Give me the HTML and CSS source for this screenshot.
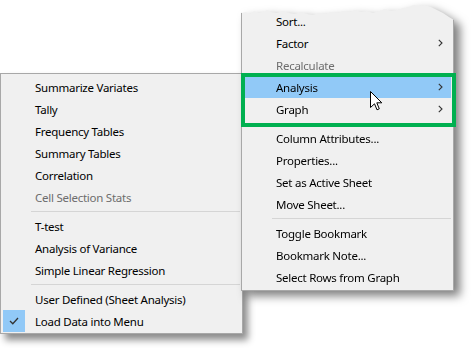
FILE: index.html
```html
<!DOCTYPE html>
<html lang="en">

<head>
    <meta charset="UTF-8" />
    <meta name="viewport" content="width=device-width, initial-scale=1.0" />
    <title>Context Menu</title>
    <link rel="stylesheet" href="styles.css">
</head>

<body>
    <div class="canvas">

        <!-- Submenu: Analysis -->
        <ul class="menu menu-sub">
            <li class="item"><span class="check"></span><span class="label">Summarize Variates</span></li>
            <li class="item"><span class="check"></span><span class="label">Tally</span></li>
            <li class="item"><span class="check"></span><span class="label">Frequency Tables</span></li>
            <li class="item"><span class="check"></span><span class="label">Summary Tables</span></li>
            <li class="item"><span class="check"></span><span class="label">Correlation</span></li>
            <li class="item disabled"><span class="check"></span><span class="label">Cell Selection Stats</span></li>
            <li class="sep"></li>
            <li class="item"><span class="check"></span><span class="label">T-test</span></li>
            <li class="item"><span class="check"></span><span class="label">Analysis of Variance</span></li>
            <li class="item"><span class="check"></span><span class="label">Simple Linear Regression</span></li>
            <li class="sep"></li>
            <li class="item"><span class="check"></span><span class="label">User Defined (Sheet Analysis)</span></li>
            <li class="item">
                <span class="check on">
                    <svg width="10" height="8" viewBox="0 0 10 8"><polyline points="1,4 3.8,6.8 9,1" fill="none" stroke="#333" stroke-width="1.3"/></svg>
                </span>
                <span class="label">Load Data into Menu</span>
            </li>
        </ul>

        <!-- Main context menu (top is torn off) -->
        <div class="main-wrap">
            <ul class="menu menu-main">
                <li class="item"><span class="check"></span><span class="label">Sort...</span></li>
                <li class="item"><span class="check"></span><span class="label">Factor</span><span class="arrow"><svg width="5" height="8" viewBox="0 0 5 8"><polyline points="0.8,0.8 4,4 0.8,7.2" fill="none" stroke="#333" stroke-width="1.1"/></svg></span></li>
                <li class="item disabled"><span class="check"></span><span class="label">Recalculate</span></li>
                <li class="item active"><span class="check"></span><span class="label">Analysis</span><span class="arrow"><svg width="5" height="8" viewBox="0 0 5 8"><polyline points="0.8,0.8 4,4 0.8,7.2" fill="none" stroke="#333" stroke-width="1.1"/></svg></span></li>
                <li class="item"><span class="check"></span><span class="label">Graph</span><span class="arrow"><svg width="5" height="8" viewBox="0 0 5 8"><polyline points="0.8,0.8 4,4 0.8,7.2" fill="none" stroke="#333" stroke-width="1.1"/></svg></span></li>
                <li class="sep"></li>
                <li class="item"><span class="check"></span><span class="label">Column Attributes...</span></li>
                <li class="item"><span class="check"></span><span class="label">Properties...</span></li>
                <li class="item"><span class="check"></span><span class="label">Set as Active Sheet</span></li>
                <li class="item"><span class="check"></span><span class="label">Move Sheet...</span></li>
                <li class="sep"></li>
                <li class="item"><span class="check"></span><span class="label">Toggle Bookmark</span></li>
                <li class="item"><span class="check"></span><span class="label">Bookmark Note...</span></li>
                <li class="item"><span class="check"></span><span class="label">Select Rows from Graph</span></li>
            </ul>
        </div>

        <!-- Green annotation around Analysis / Graph -->
        <div class="highlight-box"></div>

        <!-- Mouse pointer -->
        <svg class="cursor" width="13" height="20" viewBox="0 0 13 20">
            <path d="M0.5 0.5 V16.5 L4.5 12.8 L7 18.8 L9.3 17.8 L6.8 11.8 H11.8 Z" fill="#fff" stroke="#000" stroke-width="1" stroke-linejoin="miter"/>
        </svg>
    </div>
</body>

</html>
```

FILE: styles.css
```css
/* Page */
body {
    margin: 0;
    background: #fff;
    font-family: "Noto Sans", "Open Sans", sans-serif;
    font-size: 11.5px;
    letter-spacing: -0.25px;
    color: #000;
}

/* Free canvas holding the two popup menus */
.canvas {
    position: relative;
    width: 474px;
    height: 350px;
    overflow: hidden;
}

/* Common menu box */
.menu {
    list-style: none;
    margin: 0;
    padding: 2px;
    background: #f0f0f0;
    border: 1px solid #a8a8a8;
    box-sizing: border-box;
}

/* Left submenu */
.menu-sub {
    position: absolute;
    left: 0;
    top: 73px;
    width: 243px;
    height: 261px;
    box-shadow: 5px 6px 7px rgba(0, 0, 0, 0.45);
}

/* Wrapper gives the torn menu its shadow */
.main-wrap {
    position: absolute;
    left: 241px;
    top: 0;
    filter: drop-shadow(6px 5px 5px rgba(0, 0, 0, 0.5));
}

/* Right (main) menu with a torn top edge */
.menu-main {
    width: 213px;
    height: 291px;
    border-top: none;
    padding-top: 10px;
    clip-path: polygon(0 13px, 5px 12px, 9px 14px, 13px 11px, 18px 13px, 22px 12px, 26px 10px, 30px 12px,
        36px 13px, 42px 11px, 48px 13px, 54px 14px, 60px 12px, 66px 14px, 72px 15px, 78px 13px,
        84px 14px, 90px 12px, 96px 13px, 102px 11px, 108px 12px, 114px 10px, 120px 12px, 126px 11px,
        132px 13px, 138px 11px, 144px 9px, 150px 11px, 156px 10px, 162px 8px, 168px 7px, 172px 5px,
        178px 6px, 184px 5px, 190px 7px, 196px 10px, 202px 13px, 208px 17px, 213px 20px,
        213px 100%, 0 100%);
}

/* Menu rows */
.item {
    display: flex;
    align-items: center;
    height: 22px;
    white-space: nowrap;
}

/* Icon / check gutter */
.check {
    width: 22px;
    height: 22px;
    display: flex;
    align-items: center;
    justify-content: center;
    flex-shrink: 0;
}

.check.on {
    background: #91c9f7;
}

.label {
    margin-left: 10px;
}

.disabled {
    color: #6d6d6d;
}

/* Hovered row */
.active {
    background: #91c9f7;
}

/* Submenu arrow */
.arrow {
    margin-left: auto;
    margin-right: 8px;
    display: flex;
}

/* Separator line */
.sep {
    height: 1px;
    margin: 3px 0 3px 28px;
    background: #d5d5d5;
}

/* Green annotation frame */
.highlight-box {
    position: absolute;
    left: 241px;
    top: 73px;
    width: 215px;
    height: 54px;
    border: 4px solid #00b050;
    box-sizing: border-box;
}

/* Mouse pointer */
.cursor {
    position: absolute;
    left: 370px;
    top: 91px;
}
```
